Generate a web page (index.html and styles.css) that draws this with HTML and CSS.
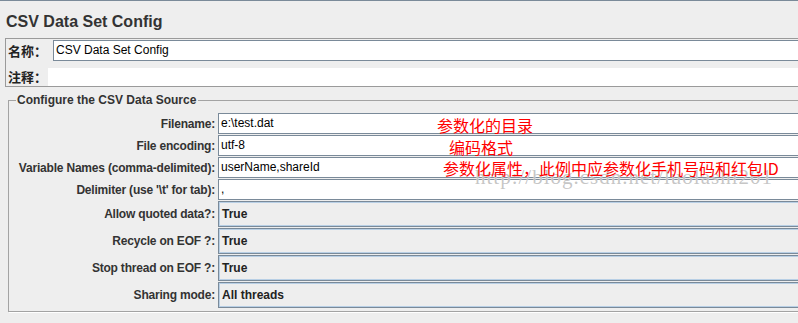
FILE: index.html
```html
<!DOCTYPE html>
<html lang="zh-CN">
<head>
  <meta charset="UTF-8" />
  <title>CSV Data Set Config</title>
  <link rel="stylesheet" href="styles.css">
</head>
<body>
  <h1 class="title">CSV Data Set Config</h1>

  <div class="name-box">
    <div class="name-row">
      <span class="cjk-label name-label">名称：</span>
      <div class="text-field">CSV Data Set Config</div>
    </div>
    <div class="comment-row">
      <span class="cjk-label comment-label">注释：</span>
      <div class="comment-area"></div>
    </div>
  </div>

  <fieldset class="source">
    <legend>Configure the CSV Data Source</legend>
    <div class="form-grid">
      <label>Filename:</label>
      <div class="text-field">e:\test.dat</div>
      <label>File encoding:</label>
      <div class="text-field">utf-8</div>
      <label>Variable Names (comma-delimited):</label>
      <div class="text-field">userName,shareId</div>
      <label>Delimiter (use '\t' for tab):</label>
      <div class="text-field">,</div>
      <label>Allow quoted data?:</label>
      <div class="combo">True</div>
      <label>Recycle on EOF ?:</label>
      <div class="combo">True</div>
      <label>Stop thread on EOF ?:</label>
      <div class="combo">True</div>
      <label>Sharing mode:</label>
      <div class="combo">All threads</div>
    </div>
  </fieldset>

  <!-- annotations drawn on top of the screenshot -->
  <div class="watermark">http://blog.csdn.net/luolashi201</div>
  <div class="note note-dir">参数化的目录</div>
  <div class="note note-enc">编码格式</div>
  <div class="note note-vars">参数化属性，此例中应参数化手机号码和红包ID</div>
</body>
</html>
```

FILE: styles.css
```css
html, body {
  overflow: hidden;
}
body {
  margin: 0;
  position: relative;
  height: 322px;
  background: #eeeeee;
  border-top: 1px solid #7a8a99;
  font-family: 'Liberation Sans', Arial, sans-serif;
  font-size: 12px;
  color: #333;
}
.title {
  margin: 11px 0 6px 6px;
  font-size: 16px;
  line-height: 20px;
  font-weight: bold;
  color: #333;
}
.name-box {
  margin: 0 -40px 0 5px;
  border: 1px solid #9a9a9a;
  padding: 1px 0 0 2px;
}
.name-row,
.comment-row {
  display: flex;
  align-items: center;
}
.comment-row {
  margin-top: 6px;
}
.cjk-label {
  font-family: 'Noto Sans CJK SC', sans-serif;
  font-weight: bold;
  font-size: 13px;
  color: #222;
  flex-shrink: 0;
}
.name-label {
  width: 45px;
}
.comment-label {
  width: 40px;
}
.text-field {
  flex: 1;
  height: 19px;
  line-height: 19px;
  padding-left: 2px;
  background: #fff;
  border: 1px solid #7a8a99;
  color: #000;
  white-space: nowrap;
}
.comment-area {
  flex: 1;
  height: 18px;
  background: #fff;
}
.source {
  margin: 6px -40px 0 8px;
  padding: 6px 0 3px 4px;
  border: 1px solid #a3a3a3;
  box-shadow: 1px 1px 0 #fff;
}
.source legend {
  margin-left: 3px;
  padding: 0 2px 0 1px;
  font-weight: bold;
  font-size: 12px;
  line-height: 14px;
  color: #333;
}
.form-grid {
  display: grid;
  grid-template-columns: 202px 1fr;
  column-gap: 3px;
  row-gap: 1px;
  align-items: center;
}
.form-grid label {
  text-align: right;
  font-weight: bold;
  letter-spacing: -0.2px;
  white-space: nowrap;
}
.form-grid .text-field {
  height: 19px;
}
.combo {
  height: 24px;
  line-height: 24px;
  padding-left: 3px;
  border: 1px solid #7a8a99;
  box-shadow: inset 0 0 0 1px #b8cfe5;
  background: #eeeeee;
  font-weight: bold;
  color: #222;
}
.watermark {
  position: absolute;
  left: 475px;
  top: 165px;
  font-family: 'Liberation Serif', serif;
  font-size: 21px;
  line-height: 22px;
  letter-spacing: 1px;
  color: rgba(160, 160, 160, 0.6);
  text-shadow: 0 0 1px #fff;
  white-space: nowrap;
}
.note {
  position: absolute;
  font-family: 'Noto Sans CJK SC', sans-serif;
  font-size: 16px;
  line-height: 16px;
  color: #ff0000;
  white-space: nowrap;
}
.note-dir {
  left: 437px;
  top: 116px;
}
.note-enc {
  left: 449px;
  top: 138px;
}
.note-vars {
  left: 443px;
  top: 159px;
}
```
